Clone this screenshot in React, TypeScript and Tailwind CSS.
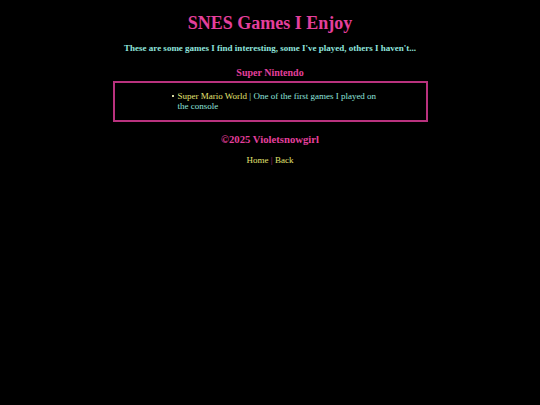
export default function App() {
  return (
    <div className="min-h-[405px] bg-black text-center font-['Liberation_Serif',serif]">
      <div className="pt-[11px]">
        <h1 className="text-[18px] font-bold leading-[24px] text-[#e43f9c]">SNES Games I Enjoy</h1>
        <p className="mt-[8px] text-[9px] font-bold leading-[11px] text-[#8fe3dc]">
          These are some games I find interesting, some I&apos;ve played, others I haven&apos;t...
        </p>
        <h2 className="mt-[13px] text-[10px] font-bold leading-[12px] text-[#e43f9c]">Super Nintendo</h2>
        <div className="mx-auto mt-[2px] w-[315px] border-2 border-[#b9327e] pt-[8px] pb-[9px] text-left">
          <ul className="ml-[63px] w-[210px] list-none text-[9px] leading-[10px] text-[#8fe3dc]">
            <li className="relative">
              <span className="absolute -left-[6px] top-[4px] h-[2px] w-[2px] bg-[#d8d8a0]" />
              <span className="text-[#e2e270]">Super Mario World</span> | One of the first games I played on the console
            </li>
          </ul>
        </div>
        <h3 className="mt-[11px] text-[10.7px] font-bold leading-[13px] text-[#e43f9c]">©2025 Violetsnowgirl</h3>
        <p className="mt-[9px] text-[9px] leading-[11px] text-[#e2e270]">
          Home <span className="text-[#b9327e]">|</span> Back
        </p>
      </div>
    </div>
  )
}
